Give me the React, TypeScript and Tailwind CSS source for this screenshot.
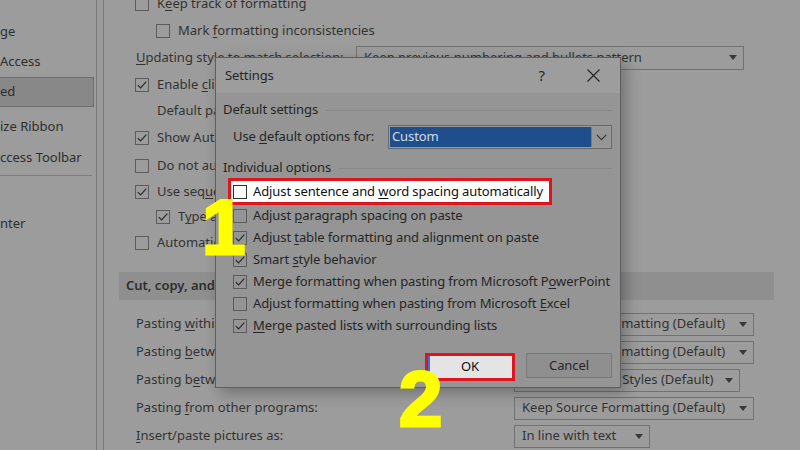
import React from "react";

const U = ({ children }: { children: React.ReactNode }) => (
  <span className="underline underline-offset-[2px] decoration-1">{children}</span>
);

function Check({ checked, strong }: { checked?: boolean; strong?: boolean }) {
  return (
    <span
      className={
        strong
          ? "w-[14px] h-[14px] shrink-0 border border-[#333333] bg-white flex items-center justify-center"
          : "w-[14px] h-[14px] shrink-0 border border-[#5c5c5c] flex items-center justify-center"
      }
    >
      {checked && (
        <svg width="12" height="12" viewBox="0 0 12 12">
          <path d="M1.8 6.2 L4.6 9 L10.3 2.6" fill="none" stroke="#2a2a2a" strokeWidth="1.2" />
        </svg>
      )}
    </span>
  );
}

function Tri() {
  return (
    <svg width="8" height="5" viewBox="0 0 8 5">
      <path d="M0 0H8L4 5Z" fill="#383838" />
    </svg>
  );
}

function Drop({ className, children }: { className: string; children: React.ReactNode }) {
  return (
    <div className={"h-[23px] border border-[#727272] flex items-center justify-between pl-[7px] pr-[6px] " + className}>
      <span className="whitespace-nowrap">{children}</span>
      <Tri />
    </div>
  );
}

function CRow({ checked, indent, h, children }: { checked?: boolean; indent?: boolean; h: string; children: React.ReactNode }) {
  return (
    <div className={"flex items-center gap-[8px] whitespace-nowrap " + h + (indent ? " pl-[21px]" : "")}>
      <Check checked={checked} />
      <span>{children}</span>
    </div>
  );
}

function DRow({ checked, children }: { checked?: boolean; children: React.ReactNode }) {
  return (
    <div className="h-[22px] flex items-center gap-[6px] pl-[10px] whitespace-nowrap">
      <Check checked={checked} />
      <span>{children}</span>
    </div>
  );
}

export default function App() {
  return (
    <div
      className="relative w-[800px] h-[450px] overflow-hidden bg-[#9c9c9c] flex text-[13px] text-[#2e2e2e]"
      style={{ fontFamily: '"Noto Sans", "Open Sans", sans-serif' }}
    >
      {/* left nav */}
      <nav className="w-[97px] shrink-0 border-r border-[#7a7a7a] pt-[16px] flex flex-col whitespace-nowrap">
        <div className="h-[31px] flex items-center">ge</div>
        <div className="h-[30px] flex items-center">Access</div>
        <div className="h-[30px] mr-[2px] flex items-center bg-[#888888] border border-l-0 border-[#6d6d6d]">ed</div>
        <div className="h-[4px]" />
        <div className="h-[31px] flex items-center">ize Ribbon</div>
        <div className="h-[31px] flex items-center">ccess Toolbar</div>
        <div className="mt-[2px] h-px w-[92px] bg-[#7e7e7e]" />
        <div className="h-[32px]" />
        <div className="h-[31px] flex items-center">nter</div>
      </nav>
      <div className="w-[6px] shrink-0" />
      {/* main */}
      <main className="flex-1 border-l border-[#7a7a7a] flex flex-col text-[#333333]">
        <div className="mt-[-9px] pl-[31px] flex flex-col">
          <CRow h="h-[26px]">
            K<U>e</U>ep track of formatting
          </CRow>
          <CRow h="h-[27px]" indent>
            Mark <U>f</U>ormatting inconsistencies
          </CRow>
          <div className="h-[27px] flex items-center whitespace-nowrap">
            <span className="w-[221px] pl-px">
              <U>U</U>pdating style to match selection:
            </span>
            <Drop className="w-[388px] h-[24px] pr-[5px]">Keep previous numbering and bullets pattern</Drop>
          </div>
          <CRow h="h-[27px]" checked>
            Enable <U>c</U>lick and type
          </CRow>
          <div className="h-[26px] flex items-center pl-[22px] whitespace-nowrap">Default paragraph style:</div>
          <CRow h="h-[28px]" checked>
            Show AutoComplete suggestions
          </CRow>
          <CRow h="h-[27px]">Do not automatically hyperlink screenshot</CRow>
          <CRow h="h-[25px]" checked>
            Use seq<U>u</U>ence checking
          </CRow>
          <CRow h="h-[26px]" checked indent>
            T<U>y</U>pe and replace
          </CRow>
          <CRow h="h-[26px]">Automatically switch keyboard to match language of surrounding text</CRow>
        </div>
        <div className="mt-[16px] ml-[15px] w-[655px] h-[28px] bg-[#8f8f8f] flex items-center pl-[7px] font-semibold text-[#2e2e2e]">
          Cut, copy, and paste
        </div>
        <div className="mt-[10px] pl-[32px] flex flex-col whitespace-nowrap">
          <div className="h-[28px] flex items-center">
            <span className="w-[378px]">
              Pasting <U>w</U>ithin the same document:
            </span>
            <Drop className="w-[240px]">Keep Source Formatting (Default)</Drop>
          </div>
          <div className="h-[28px] flex items-center">
            <span className="w-[378px]">
              Pasting <U>b</U>etween documents:
            </span>
            <Drop className="w-[240px]">Keep Source Formatting (Default)</Drop>
          </div>
          <div className="h-[28px] flex items-center">
            <span className="w-[378px]">
              Pasting b<U>e</U>tween documents when style definitions conflict:
            </span>
            <Drop className="w-[226px]">Use Destination Styles (Default)</Drop>
          </div>
          <div className="h-[28px] flex items-center">
            <span className="w-[378px]">
              Pasting <U>f</U>rom other programs:
            </span>
            <Drop className="w-[240px]">Keep Source Formatting (Default)</Drop>
          </div>
          <div className="h-[28px] flex items-center">
            <span className="w-[378px]">
              <U>I</U>nsert/paste pictures as:
            </span>
            <Drop className="w-[136px]">In line with text</Drop>
          </div>
        </div>
      </main>

      {/* Settings dialog */}
      <div className="absolute left-[215px] top-[57px] w-[406px] h-[331px] border border-[#5e5e5e] bg-[#959595] flex flex-col shadow-[5px_5px_14px_rgba(0,0,0,0.28)] text-[#262626] tracking-[-0.1px]">
        <div className="h-[35px] shrink-0 bg-[#9d9d9d] flex items-center pl-[9px] pr-[20px]">
          <span className="flex-1">Settings</span>
          <span className="text-[15px] mr-[42px]">?</span>
          <svg width="13" height="13" viewBox="0 0 13 13">
            <path d="M0.5 0.5 L12.5 12.5 M12.5 0.5 L0.5 12.5" stroke="#262626" strokeWidth="1.2" />
          </svg>
        </div>
        <div className="flex flex-col pl-[7px] pr-[8px]">
          <div className="mt-[6px] h-[22px] flex items-center gap-[8px]">
            <span className="whitespace-nowrap">Default settings</span>
            <span className="flex-1 h-px bg-[#878787]" />
          </div>
          <div className="mt-[4px] h-[24px] flex items-center">
            <span className="w-[165px] pl-[10px] whitespace-nowrap">
              Use <U>d</U>efault options for:
            </span>
            <div className="w-[224px] h-[24px] border border-[#6a6a6a] bg-[#9a9a9a] flex p-px">
              <div className="flex-1 bg-[#1f4e8c] text-[#d4dceb] flex items-center pl-[2px]">Custom</div>
              <div className="w-[19px] flex items-center justify-center border-l border-[#7a7a7a] bg-[#969696]">
                <svg width="11" height="7" viewBox="0 0 11 7">
                  <path d="M0.8 0.8 L5.5 5.6 L10.2 0.8" fill="none" stroke="#333333" strokeWidth="1.1" />
                </svg>
              </div>
            </div>
          </div>
          <div className="mt-[9px] h-[20px] flex items-center gap-[8px]">
            <span className="whitespace-nowrap">Individual options</span>
            <span className="flex-1 h-px bg-[#878787]" />
          </div>
          <div className="ml-[5px] w-[324px] h-[27px] border-[3px] border-[#e0141c] bg-white text-[#111111] flex items-center gap-[6px] pl-[2px] whitespace-nowrap">
            <Check strong />
            <span>
              Adjust sentence and <U>w</U>ord spacing automatically
            </span>
          </div>
          <DRow>
            Adjust <U>p</U>aragraph spacing on paste
          </DRow>
          <DRow checked>
            Adjust <U>t</U>able formatting and alignment on paste
          </DRow>
          <DRow checked>
            Smart <U>s</U>tyle behavior
          </DRow>
          <DRow checked>
            Merge formatting when pasting from Microsoft P<U>o</U>werPoint
          </DRow>
          <DRow>
            Adjust formatting when pasting from Microsoft <U>E</U>xcel
          </DRow>
          <DRow checked>
            <U>M</U>erge pasted lists with surrounding lists
          </DRow>
          <div className="mt-[16px] flex justify-end items-start gap-[11px]">
            <div className="w-[90px] h-[28px] border-[3px] border-[#e0141c] bg-[#e4e4e4] flex">
              <div className="w-[2px] bg-[#2f74d8]" />
              <div className="flex-1 flex items-center justify-center text-[#111111] pr-[2px]">OK</div>
            </div>
            <div className="w-[86px] h-[25px] border border-[#7a7a7a] bg-[#8f8f8f] flex items-center justify-center">
              Cancel
            </div>
          </div>
        </div>
      </div>

      {/* annotations */}
      <span
        className="absolute left-[202px] top-[188px] text-[78px] leading-none font-bold text-[#ffff00] [-webkit-text-stroke:3px_#ffff00]"
        style={{ fontFamily: '"Liberation Sans", Arial, sans-serif' }}
      >
        1
      </span>
      <span
        className="absolute left-[399px] top-[360px] text-[78px] leading-none font-bold text-[#ffff00] [-webkit-text-stroke:3px_#ffff00]"
        style={{ fontFamily: '"Liberation Sans", Arial, sans-serif' }}
      >
        2
      </span>
    </div>
  );
}
